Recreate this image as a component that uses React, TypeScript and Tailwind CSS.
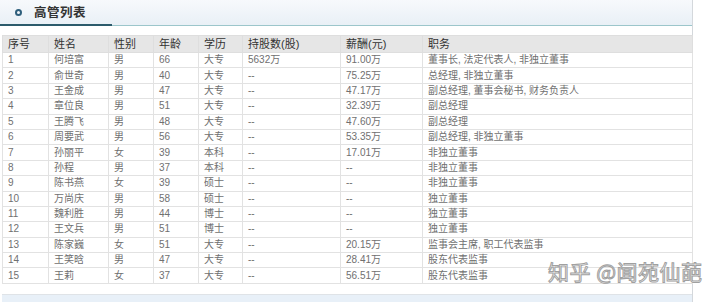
import React from 'react';

interface Exec {
  no: number;
  name: string;
  sex: string;
  age: number;
  edu: string;
  shares: string;
  pay: string;
  role: string;
}

const rows: Exec[] = [
  { no: 1, name: '何培富', sex: '男', age: 66, edu: '大专', shares: '5632万', pay: '91.00万', role: '董事长, 法定代表人, 非独立董事' },
  { no: 2, name: '俞世奇', sex: '男', age: 40, edu: '大专', shares: '--', pay: '75.25万', role: '总经理, 非独立董事' },
  { no: 3, name: '王金成', sex: '男', age: 47, edu: '大专', shares: '--', pay: '47.17万', role: '副总经理, 董事会秘书, 财务负责人' },
  { no: 4, name: '章位良', sex: '男', age: 51, edu: '大专', shares: '--', pay: '32.39万', role: '副总经理' },
  { no: 5, name: '王腾飞', sex: '男', age: 48, edu: '大专', shares: '--', pay: '47.60万', role: '副总经理' },
  { no: 6, name: '周要武', sex: '男', age: 56, edu: '大专', shares: '--', pay: '53.35万', role: '副总经理, 非独立董事' },
  { no: 7, name: '孙丽平', sex: '女', age: 39, edu: '本科', shares: '--', pay: '17.01万', role: '非独立董事' },
  { no: 8, name: '孙程', sex: '男', age: 37, edu: '本科', shares: '--', pay: '--', role: '非独立董事' },
  { no: 9, name: '陈书燕', sex: '女', age: 39, edu: '硕士', shares: '--', pay: '--', role: '非独立董事' },
  { no: 10, name: '万尚庆', sex: '男', age: 58, edu: '硕士', shares: '--', pay: '--', role: '独立董事' },
  { no: 11, name: '魏利胜', sex: '男', age: 44, edu: '博士', shares: '--', pay: '--', role: '独立董事' },
  { no: 12, name: '王文兵', sex: '男', age: 51, edu: '博士', shares: '--', pay: '--', role: '独立董事' },
  { no: 13, name: '陈家巍', sex: '女', age: 51, edu: '大专', shares: '--', pay: '20.15万', role: '监事会主席, 职工代表监事' },
  { no: 14, name: '王笑晗', sex: '男', age: 47, edu: '大专', shares: '--', pay: '28.41万', role: '股东代表监事' },
  { no: 15, name: '王莉', sex: '女', age: 37, edu: '大专', shares: '--', pay: '56.51万', role: '股东代表监事' },
];

const headers = ['序号', '姓名', '性别', '年龄', '学历', '持股数(股)', '薪酬(元)', '职务'];
const widths = ['w-[46px]', 'w-[60px]', 'w-[45px]', 'w-[45px]', 'w-[44px]', 'w-[98px]', 'w-[82px]', 'w-[270px]'];

const App: React.FC = () => {
  return (
    <div className="relative w-[720px] h-[302px] overflow-hidden bg-white font-['Liberation_Sans','Noto_Sans_CJK_SC',sans-serif]">
      <div className="w-[693px] h-full border-r border-[#d4d8dc] flex flex-col">
        {/* panel title */}
        <div className="h-[26px] flex items-center bg-gradient-to-b from-[#f7f9fc] to-[#e9f0f6] border-b border-[#9cc6cb] relative">
          <span className="ml-[15px] w-[7px] h-[7px] rounded-full border-2 border-[#2f5f7c]" />
          <span className="ml-[12px] text-[12.5px] font-semibold text-[#333] tracking-[0.5px] font-['Noto_Sans_CJK_SC',serif]">高管列表</span>
          <div className="absolute left-0 bottom-[-1px] w-[112px] h-[2px] bg-[#2c5b6c]" />
        </div>

        <div className="pt-[9px] pl-[2px]">
          <table className="table-fixed border-collapse w-[690px] text-[10px]">
            <colgroup>
              {widths.map((w, i) => (
                <col key={i} className={w} />
              ))}
            </colgroup>
            <thead>
              <tr className="h-[17px] bg-[#e6e6e6]">
                {headers.map((h) => (
                  <th key={h} className="border border-[#dedede] text-left font-normal text-[11px] text-[#333] px-[5px] leading-none">
                    {h}
                  </th>
                ))}
              </tr>
            </thead>
            <tbody>
              {rows.map((r) => (
                <tr key={r.no} className="h-[15.4px] text-[#707070]">
                  <td className="border border-[#e2e2e2] px-[5px] leading-none">{r.no}</td>
                  <td className="border border-[#e2e2e2] px-[5px] leading-none">{r.name}</td>
                  <td className="border border-[#e2e2e2] px-[5px] leading-none">{r.sex}</td>
                  <td className="border border-[#e2e2e2] px-[5px] leading-none">{r.age}</td>
                  <td className="border border-[#e2e2e2] px-[5px] leading-none">{r.edu}</td>
                  <td className="border border-[#e2e2e2] px-[5px] leading-none">{r.shares}</td>
                  <td className="border border-[#e2e2e2] px-[5px] leading-none">{r.pay}</td>
                  <td className="border border-[#e2e2e2] px-[5px] leading-none">{r.role}</td>
                </tr>
              ))}
            </tbody>
          </table>
        </div>

        <div className="mt-auto h-[8px] border-t border-[#dfe3e7] bg-[#e8f0f8] ml-[2px]" />
      </div>

      {/* watermark */}
      <div className="absolute left-[548px] top-[261px] whitespace-nowrap text-[21px] tracking-[0.5px] leading-none text-white [-webkit-text-stroke:1px_#a0a0a0] font-['Noto_Sans_CJK_SC',sans-serif]">
        知乎 @闻苑仙葩
      </div>
    </div>
  );
};

export default App;
